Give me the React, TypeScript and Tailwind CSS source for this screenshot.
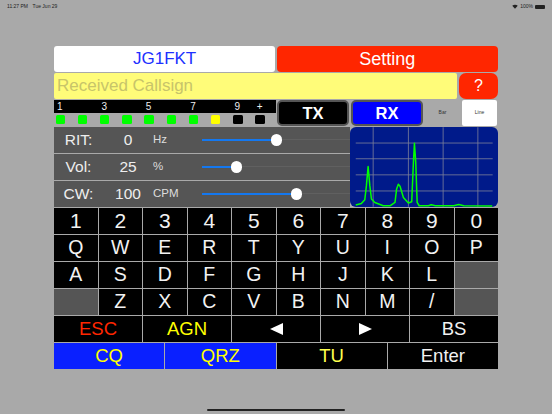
import React from 'react';

const font = { fontFamily: '"Liberation Sans", Arial, sans-serif' };

const leds = ['g', 'g', 'g', 'g', 'g', 'g', 'g', 'y', 'k', 'k'];
const meterLabels = ['1', '', '3', '', '5', '', '7', '', '9', '+'];
const rows = [
  ['1', '2', '3', '4', '5', '6', '7', '8', '9', '0'],
  ['Q', 'W', 'E', 'R', 'T', 'Y', 'U', 'I', 'O', 'P'],
  ['A', 'S', 'D', 'F', 'G', 'H', 'J', 'K', 'L', ''],
  ['', 'Z', 'X', 'C', 'V', 'B', 'N', 'M', '/', ''],
];

const trace =
  '5.7,77.3 11.3,75.7 14.7,72 16.3,58 18,39 19.7,58 21.3,71.3 24.7,74.7 33,78 39.7,78 44.7,74.7 46.3,61.3 48,56.7 49.7,58.7 53,69.7 58,75.3 61.3,74 63,34.7 64,16 65.3,34.7 66.7,74.7 68.7,78 78,78 80.7,77 84.7,78 103,78 108,76.7 113,78 141.3,78.3';

const SliderRow = ({ label, value, unit, fill }: { label: string; value: string; unit: string; fill: number }) => (
  <div className="flex h-[25.5px] items-center bg-[#555555] text-[#eeeeee]">
    <div className="w-[49px] text-center text-[15.5px]">{label}</div>
    <div className="w-[50px] text-center text-[15.5px]">{value}</div>
    <div className="w-[49px] text-[11.5px] text-[#dddddd]">{unit}</div>
    <div className="flex flex-1 items-center">
      <div className="h-[1.5px] bg-[#1478f0]" style={{ width: fill }} />
      <div className="z-10 -mx-[5.5px] h-[11.5px] w-[11.5px] shrink-0 rounded-full bg-white" />
      <div className="h-px flex-1 bg-[#606060]" />
    </div>
  </div>
);

const Key = ({ children, className = 'text-white' }: { children?: React.ReactNode; className?: string }) => (
  <div className={`flex items-center justify-center ${className}`}>{children}</div>
);

export default function App() {
  return (
    <div className="flex h-[414px] w-[552px] flex-col overflow-hidden bg-[#a9a9a9] leading-none" style={font}>
      {/* status bar */}
      <div className="flex h-[11px] items-center justify-between px-[7px] pt-[2px] text-[5px] text-[#222222]">
        <div className="flex gap-[4.5px]">
          <span>11:27 PM</span>
          <span>Tue Jun 29</span>
        </div>
        <div className="flex items-center gap-[2px]">
          <svg width="6" height="5" viewBox="0 0 12 10">
            <path d="M6 9.5 0.5 3.5C3.5 0.6 8.5 0.6 11.5 3.5Z" fill="#222222" />
          </svg>
          <span>100%</span>
          <div className="h-[4px] w-[10px] rounded-[1px] bg-[#222222]" />
        </div>
      </div>

      <div className="mx-auto mt-[35px] flex w-[444px] flex-col">
        {/* top buttons */}
        <div className="grid h-[25.5px] grid-cols-2 gap-[1.5px]">
          <div className="flex items-center justify-center rounded-[3px] bg-white text-[17px] text-[#2030ff]">JG1FKT</div>
          <div className="flex items-center justify-center rounded-[4px] bg-[#ff2600] text-[18px] text-white">Setting</div>
        </div>

        {/* received callsign */}
        <div className="mt-[1.5px] flex h-[25.5px] gap-[2px]">
          <div className="flex flex-1 items-center rounded-[2px] bg-[#fffc79] pl-[3px] text-[17px] text-[#c7c46a]">Received Callsign</div>
          <div className="flex w-[39px] items-center justify-center rounded-[7px] bg-[#ff2600] text-[16px] text-white">?</div>
        </div>

        {/* meter + tx/rx */}
        <div className="mt-[1.5px] flex h-[25.5px]">
          <div className="w-[222px]">
            <div className="grid h-[13px] grid-cols-10 bg-black text-[10px] text-[#eeeeee]">
              {meterLabels.map((m, i) => (
                <div key={i} className="flex items-center pl-[3px]">{m}</div>
              ))}
            </div>
            <div className="grid grid-cols-10 pt-[1.5px]">
              {leds.map((l, i) => (
                <div
                  key={i}
                  className={`ml-[1.5px] h-[9.5px] w-[9.5px] rounded-[1.5px] ${l === 'g' ? 'bg-[#00ff00]' : l === 'y' ? 'bg-[#ffff00]' : 'bg-black'}`}
                />
              ))}
            </div>
          </div>
          <div className="ml-[1px] flex h-[25.5px] w-[72px] items-center justify-center rounded-[5px] border-2 border-[#555555] bg-black text-[16.5px] font-bold text-white">TX</div>
          <div className="ml-[2px] flex h-[25.5px] w-[72px] items-center justify-center rounded-[5px] border-2 border-[#555555] bg-[#0000ff] text-[16.5px] font-bold text-white">RX</div>
          <div className="ml-[3px] flex w-[36px] items-center justify-center pr-[3px] text-[5px] text-[#333333]">Bar</div>
          <div className="flex w-[35px] items-center justify-center rounded-[2px] bg-white text-[5px] text-[#333333]">Line</div>
        </div>

        {/* sliders + graph */}
        <div className="mt-[1.5px] flex h-[79.5px]">
          <div className="flex w-[296px] flex-col gap-[1.5px]">
            <SliderRow label="RIT:" value="0" unit="Hz" fill={74} />
            <SliderRow label="Vol:" value="25" unit="%" fill={34} />
            <SliderRow label="CW:" value="100" unit="CPM" fill={94} />
          </div>
          <div className="w-[148px] overflow-hidden rounded-[6px] bg-[#001a8a]">
            <svg width="148" height="80" viewBox="0 0 147 79">
              <g stroke="#7d8099" strokeWidth="0.8">
                {[23, 58, 92.5, 127].map((x) => (
                  <line key={x} x1={x} y1="0" x2={x} y2="79" />
                ))}
                {[15.7, 31.3, 47.3, 63.3].map((y) => (
                  <line key={y} x1="5.7" y1={y} x2="141.7" y2={y} />
                ))}
              </g>
              <polyline points={trace} fill="none" stroke="#00ff00" strokeWidth="1.5" strokeLinejoin="round" />
            </svg>
          </div>
        </div>

        {/* keyboard */}
        <div className="mt-[1.5px] flex flex-col gap-[1.5px]">
          {rows.map((r, i) => (
            <div key={i} className={`grid h-[25.5px] grid-cols-10 gap-[1px] ${i === 0 ? 'text-[21px]' : 'text-[19.5px]'}`}>
              {r.map((k, j) => (
                <Key key={j} className={k ? 'bg-black text-[#f2f2f2]' : 'bg-[#555555]'}>{k}</Key>
              ))}
            </div>
          ))}
          <div className="grid h-[25.5px] grid-cols-5 gap-[1px] text-[18.5px]">
            <Key className="bg-black text-[#ff2600]">ESC</Key>
            <Key className="bg-black text-[#ffff00]">AGN</Key>
            <Key className="bg-black">
              <svg width="13" height="12" viewBox="0 0 13 12"><path d="M0 6 13 0V12Z" fill="white" /></svg>
            </Key>
            <Key className="bg-black">
              <svg width="13" height="12" viewBox="0 0 13 12"><path d="M13 6 0 0V12Z" fill="white" /></svg>
            </Key>
            <Key className="bg-black text-[#f2f2f2]">BS</Key>
          </div>
          <div className="grid h-[26px] grid-cols-4 gap-[1px] text-[18.5px]">
            <Key className="bg-[#0a20ff] text-[#ffff00]">CQ</Key>
            <Key className="bg-[#0a20ff] text-[#ffff00]">QRZ</Key>
            <Key className="bg-black text-[#ffff4d]">TU</Key>
            <Key className="bg-black text-[#f2f2f2]">Enter</Key>
          </div>
        </div>
      </div>

      {/* home indicator */}
      <div className="mx-auto mt-auto mb-[3px] h-[2px] w-[138px] rounded-full bg-[#222222]" />
    </div>
  );
}
